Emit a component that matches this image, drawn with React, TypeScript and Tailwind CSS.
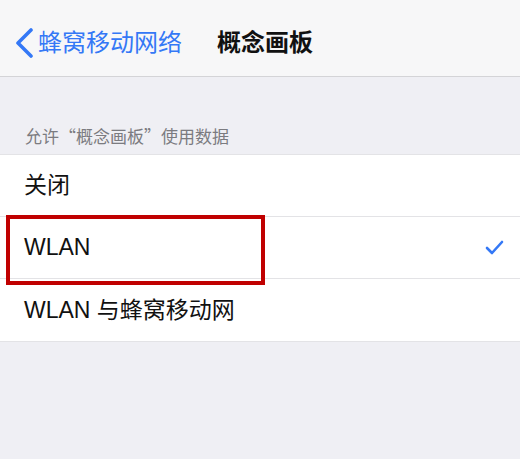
import React from "react";

export default function App() {
  return (
    <div
      className="relative w-[520px] h-[459px] bg-[#efeff4] overflow-hidden"
      style={{ fontFamily: '"Liberation Sans", "Noto Sans CJK SC", sans-serif' }}
    >
      <div className="h-[77px] bg-[#f7f7f8] border-b border-[#d4d4d7] flex items-center pt-[10px]">
        <svg width="20" height="30" viewBox="0 0 20 30" className="ml-[14px]">
          <path d="M17 2 L4 15 L17 28" fill="none" stroke="#3478f6" strokeWidth="3.6" strokeLinecap="round" strokeLinejoin="round" />
        </svg>
        <span className="ml-[4px] text-[24px] text-[#3478f6] leading-none">蜂窝移动网络</span>
        <span className="ml-[35px] text-[24px] font-bold text-[#111] leading-none">概念画板</span>
      </div>
      <div className="h-[77px] flex items-end pb-[5px] pl-[25px]">
        <span
          className="text-[17px] text-[#7b7b80] leading-[26px]"
          style={{ fontFamily: '"Noto Sans CJK SC", sans-serif' }}
        >
          允许“概念画板”使用数据
        </span>
      </div>
      <div className="bg-white border-t border-b border-[#e3e3e6]">
        <div className="h-[62px] flex items-center pl-[24px] border-b border-[#e3e3e6]">
          <span className="text-[23px] text-[#111]">关闭</span>
        </div>
        <div className="h-[62px] flex items-center pl-[24px] pr-[16px] border-b border-[#e3e3e6]">
          <span className="text-[23px] text-[#111] flex-1">WLAN</span>
          <svg width="19" height="15" viewBox="0 0 19 15">
            <path d="M2 8 L7 13 L17 2" fill="none" stroke="#3478f6" strokeWidth="2.6" strokeLinecap="round" strokeLinejoin="round" />
          </svg>
        </div>
        <div className="h-[62px] flex items-center pl-[24px]">
          <span className="text-[23px] text-[#111]">WLAN 与蜂窝移动网</span>
        </div>
      </div>
      <div className="absolute left-[6px] top-[215px] w-[259px] h-[70px] border-4 border-[#c00000]" />
    </div>
  );
}
